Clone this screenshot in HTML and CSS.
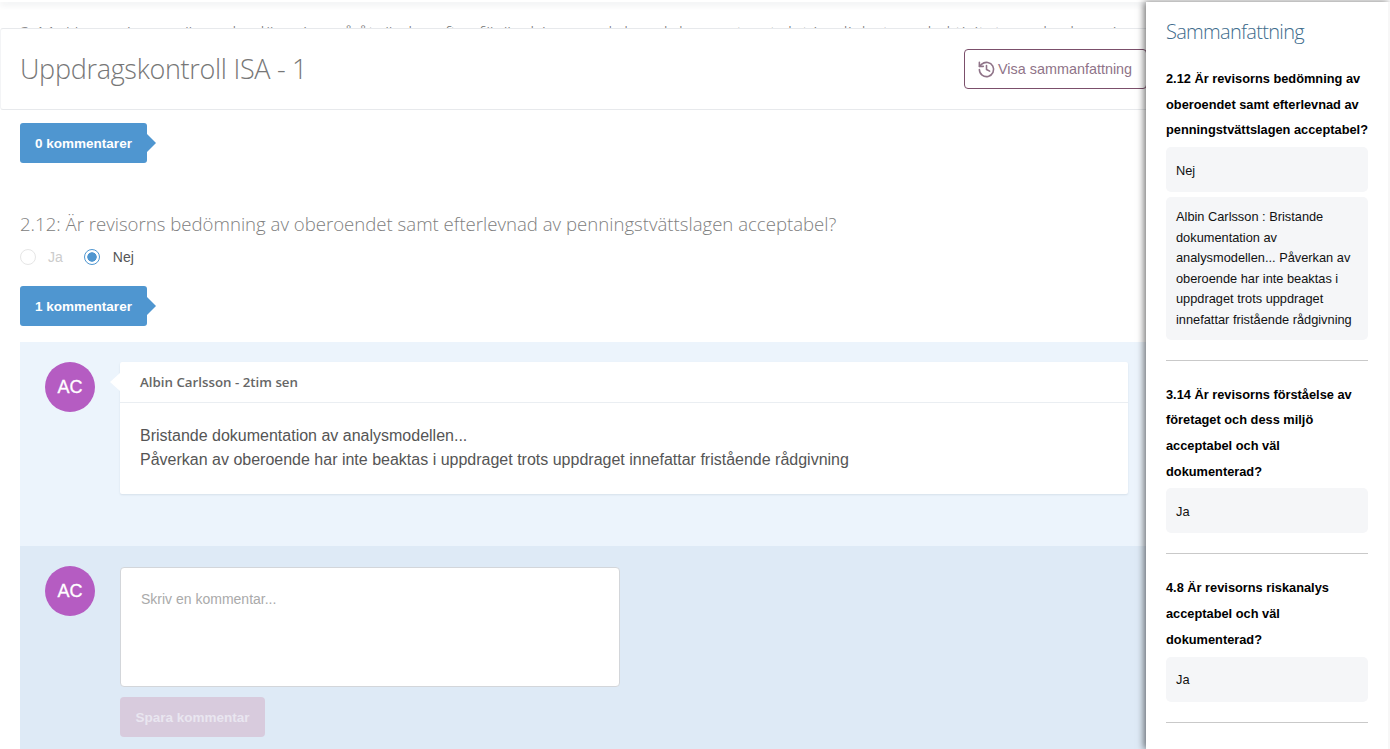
FILE: index.html
```html
<!DOCTYPE html>
<html lang="sv">
<head>
<meta charset="utf-8">
<title>Uppdragskontroll ISA - 1</title>
<link rel="stylesheet" href="styles.css">
</head>
<body>
<div class="page">
  <div class="topline"></div>
  <div class="prev-row"><p class="prev-text">2.11: Har revisorn gör en bedömning på åtgärder efter förändringar och har dokumenterat det i enlighet med aktiviteter och planering</p></div>
  <header class="head">
    <h1 class="title">Uppdragskontroll ISA - 1</h1>
    <button class="summary-btn" type="button">
      <svg class="history" viewBox="0 0 24 24" width="19" height="19" aria-hidden="true"><path d="M3 12a9 9 0 1 0 3-6.7L3 8"/><path d="M3 3v5h5"/><path d="M12 7v5l4 2"/></svg>
      <span>Visa sammanfattning</span>
    </button>
  </header>
  <main class="content">
    <div class="badge badge-first">0 kommentarer</div>
    <h2 class="question">2.12: Är revisorns bedömning av oberoendet samt efterlevnad av penningstvättslagen acceptabel?</h2>
    <div class="radios">
      <span class="radio"></span><span class="radio-label muted">Ja</span>
      <span class="radio checked"></span><span class="radio-label">Nej</span>
    </div>
    <div class="badge">1 kommentarer</div>
    <section class="comments">
      <div class="avatar">AC</div>
      <article class="card">
        <div class="card-head">Albin Carlsson - 2tim sen</div>
        <div class="card-body">Bristande dokumentation av analysmodellen...<br>Påverkan av oberoende har inte beaktas i uppdraget trots uppdraget innefattar fristående rådgivning</div>
      </article>
    </section>
    <section class="reply">
      <div class="avatar">AC</div>
      <div class="reply-form">
        <div class="textarea">Skriv en kommentar...</div>
        <button class="save" type="button">Spara kommentar</button>
      </div>
    </section>
  </main>
  <aside class="panel">
    <h3 class="panel-title">Sammanfattning</h3>
    <div class="item">
      <p class="q">2.12 Är revisorns bedömning av oberoendet samt efterlevnad av penningstvättslagen acceptabel?</p>
      <div class="answer">Nej</div>
      <div class="answer note">Albin Carlsson : Bristande dokumentation av analysmodellen... Påverkan av oberoende har inte beaktas i uppdraget trots uppdraget innefattar fristående rådgivning</div>
    </div>
    <div class="item">
      <p class="q">3.14 Är revisorns förståelse av företaget och dess miljö acceptabel och väl dokumenterad?</p>
      <div class="answer">Ja</div>
    </div>
    <div class="item">
      <p class="q">4.8 Är revisorns riskanalys acceptabel och väl dokumenterad?</p>
      <div class="answer">Ja</div>
    </div>
  </aside>
</div>
</body>
</html>
```
FILE: styles.css
```css
* { box-sizing: border-box; }
html, body { margin: 0; height: 100%; overflow: hidden; background: #fff; }
body { font-family: "Liberation Sans", Arial, sans-serif; }
.page { position: relative; width: 1390px; height: 749px; overflow: hidden; }

.topline { height: 2px; background: #fff; box-shadow: 0 2px 6px rgba(60, 70, 90, .2); position: relative; z-index: 1; }
.prev-row { height: 26px; padding: 0 242px 0 20px; overflow: hidden; }
.prev-text { margin: 19px 0 0; font: 300 18.6px/24px "Open Sans", sans-serif; color: #777; white-space: nowrap; }

.head { height: 82px; display: flex; align-items: center; justify-content: space-between; padding: 0 242px 0 20px; border: 1px solid #e7e9ec; border-left-color: #f3f4f6; border-radius: 3px; background: #fff; }
.title { margin: 0 0 0 -1px; font: 300 27px/36px "Open Sans", sans-serif; letter-spacing: -.3px; color: #777; }
.summary-btn { display: flex; align-items: center; gap: 2px; width: 183px; height: 40px; padding: 0 0 0 12px; border: 1px solid #7b4f6b; border-radius: 4px; background: #fff; color: #8f7388; font: 14.4px "Liberation Sans", Arial, sans-serif; }
.history { fill: none; stroke: #8f7388; stroke-width: 2; stroke-linecap: round; stroke-linejoin: round; }

.content { padding: 13px 242px 0 20px; }
.badge { position: relative; width: 127px; height: 40px; background: #4f96d0; border-radius: 3px; color: #fff; font-size: 13.5px; font-weight: 700; line-height: 41px; text-align: center; }
.badge::after { content: ""; position: absolute; left: 127px; top: 11px; border-style: solid; border-width: 9px 0 9px 9px; border-color: transparent transparent transparent #4f96d0; }
.badge-first { margin-bottom: 48px; }
.question { margin: 0; font: 300 18.6px/26px "Open Sans", sans-serif; color: #808080; white-space: nowrap; }
.radios { display: flex; align-items: center; height: 20px; margin: 10px 0 19px; font-size: 14px; color: #555; }
.radio { width: 16px; height: 16px; border: 1px solid #e6e6e6; border-radius: 50%; flex: none; }
.radio.checked { border-color: #4f96d0; background: radial-gradient(circle, #4f96d0 0 4.4px, #fff 5px); }
.radio-label { margin-left: 13px; margin-right: 35px; }
.radio-label.muted { margin-left: 12px; margin-right: 21px; color: #ccc; }

.comments { display: flex; margin-top: 16px; height: 204px; padding: 20px 20px 0 25px; background: #ecf4fc; }
.avatar { flex: none; width: 50px; height: 50px; margin-right: 25px; border-radius: 50%; background: #b55cc2; color: #fff; font-size: 18px; line-height: 50px; text-align: center; -webkit-text-stroke: .3px #fff; }
.card { position: relative; flex: 1; height: 132px; background: #fff; border-radius: 2px; box-shadow: 0 1px 2px rgba(60, 80, 110, .12); }
.card::before { content: ""; position: absolute; left: -10px; top: 11px; border-style: solid; border-width: 9px 10px 9px 0; border-color: transparent #fff transparent transparent; }
.card-head { height: 41px; padding: 0 20px; border-bottom: 1px solid #eaeef2; font: 600 13.3px/40px "Open Sans", sans-serif; color: #666; }
.card-body { padding: 21px 20px 0; font-size: 16px; line-height: 24px; color: #555; }

.reply { display: flex; height: 203px; padding: 20px 20px 0 25px; background: #deeaf6; }
.reply-form { width: 500px; padding-top: 1px; }
.textarea { height: 120px; padding: 22px 20px; background: #fff; border: 1px solid #d3d6da; border-radius: 4px; font-size: 14px; line-height: 18px; color: #aaa; }
.save { display: block; width: 145px; height: 40px; margin-top: 10px; border: 0; border-radius: 4px; background: #d8cbdd; color: #e9e6f0; font: 700 13.5px "Liberation Sans", Arial, sans-serif; }

.panel { position: absolute; left: 1146px; top: 2px; bottom: 0; width: 244px; padding: 0 20px; background: #fff; border-right: 2px solid #f7f7f7; box-shadow: -2px 0 7px rgba(0, 0, 0, .55); z-index: 2; }
.panel-title { margin: 0; padding-top: 16px; height: 63px; font: 300 20px/28px "Open Sans", sans-serif; letter-spacing: -.7px; color: #3e6c8c; }
.item { padding-bottom: 20px; margin-bottom: 20px; border-bottom: 1px solid #c9c9c9; }
.q { margin: 0 0 4px; padding-top: 1px; font-size: 12.8px; font-weight: 700; line-height: 25.7px; color: #000; }
.answer { min-height: 45px; padding: 13.5px 10px 11px; background: #f5f6f8; border-radius: 5px; font-size: 12.8px; line-height: 20.5px; color: #111; }
.answer.note { margin-top: 5px; padding: 10px 10px 9.5px; }
```
